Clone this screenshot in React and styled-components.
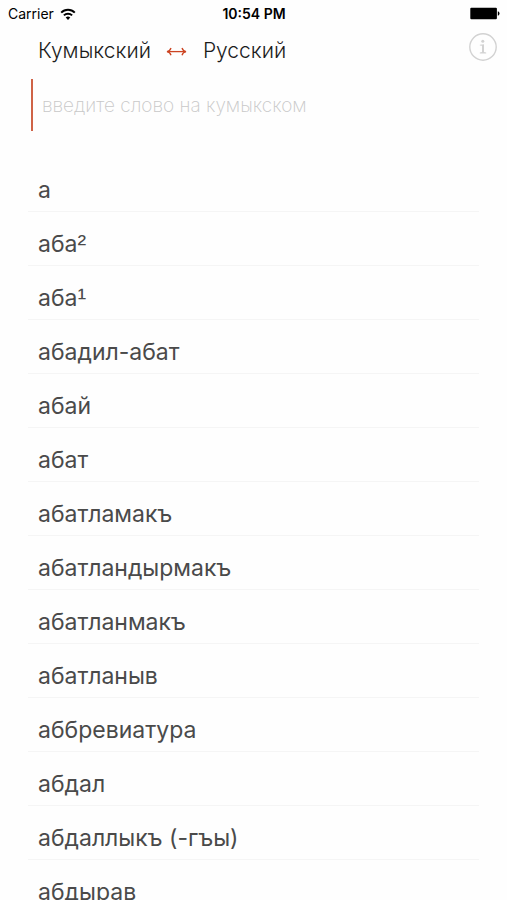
import React, { useState } from 'react'
import styled, { createGlobalStyle } from 'styled-components'

const colors = {
  background: '#fefefe',
  black: '#000',
  title: '#1c1c1c',
  word: '#4a4a4a',
  accent: '#cc4422',
  caret: '#cf6347',
  placeholder: '#c8c8c8',
  line: '#f5f5f5',
  info: '#d2d2d2'
}

const fonts = {
  text: `Inter, 'Liberation Sans', sans-serif`,
  index: `'Liberation Sans', Arial, sans-serif`
}

// homonyms carry a superscript index
const words = [
  { text: 'а' },
  { text: 'аба', index: '²' },
  { text: 'аба', index: '¹' },
  { text: 'абадил-абат' },
  { text: 'абай' },
  { text: 'абат' },
  { text: 'абатламакъ' },
  { text: 'абатландырмакъ' },
  { text: 'абатланмакъ' },
  { text: 'абатланыв' },
  { text: 'аббревиатура' },
  { text: 'абдал' },
  { text: 'абдаллыкъ (-гъы)' },
  { text: 'абдырав' }
]

const languages = [
  { name: 'Кумыкский', hint: 'введите слово на кумыкском' },
  { name: 'Русский', hint: 'введите слово на русском' }
]

const WifiIcon = () =>
  <svg width="16" height="12" viewBox="0 0 16 12" fill="none" stroke={colors.black} strokeWidth="2" aria-hidden="true">
    <path d="M1.2 4.6a9.6 9.6 0 0 1 13.6 0" />
    <path d="M3.9 7.4a5.8 5.8 0 0 1 8.2 0" />
    <path d="M8 12 5.7 9.6a3.3 3.3 0 0 1 4.6 0z" fill={colors.black} stroke="none" />
  </svg>

const BatteryIcon = () =>
  <svg width="30" height="13" viewBox="0 0 30 13" aria-hidden="true">
    <rect x="0.3" y="0.8" width="26.6" height="11.4" rx="1" />
    <path d="M27.8 4.2a2.4 2.4 0 0 1 0 4.6z" />
  </svg>

const SwapIcon = () =>
  <svg width="21" height="12" viewBox="0 0 21 12" fill="none" stroke={colors.accent} strokeWidth="1.3" aria-hidden="true">
    <path d="M1.5 6.6h18" />
    <path d="M5 3C4.4 4.9 2.9 6.2 1 6.6c1.9.4 3.4 1.7 4 3.6M16 3c.6 1.9 2.1 3.2 4 3.6-1.9.4-3.4 1.7-4 3.6" />
  </svg>

const InfoIcon = () =>
  <svg width="28" height="28" viewBox="0 0 28 28" fill={colors.info} aria-hidden="true">
    <circle cx="14" cy="14" r="13.2" fill="none" stroke={colors.info} strokeWidth="1.4" />
    <circle cx="13.8" cy="8.3" r="1.5" />
    <path d="M10.8 11.7l4.2-.5v7.9l2.2.4v.9h-6.4v-.9l2.2-.4v-6.3l-2.2-.3z" />
  </svg>

const App = () => {
  const [from, setFrom] = useState(0)
  const [query, setQuery] = useState('')
  const found = words.filter(word => word.text.startsWith(query.toLowerCase()))

  return (
    <Screen>
      <GlobalStyle />
      <StatusBar>
        <Carrier>Carrier <WifiIcon /></Carrier>
        <Clock>10:54 PM</Clock>
        <Battery><BatteryIcon /></Battery>
      </StatusBar>
      <Header>
        <Language>{languages[from].name}</Language>
        <SwapButton type="button" aria-label="Поменять языки" onClick={() => setFrom(1 - from)}>
          <SwapIcon />
        </SwapButton>
        <Language>{languages[1 - from].name}</Language>
        <InfoButton type="button" aria-label="О программе">
          <InfoIcon />
        </InfoButton>
      </Header>
      <SearchInput
        type="text"
        aria-label="Поиск слова"
        placeholder={languages[from].hint}
        value={query}
        onChange={e => setQuery(e.target.value)}
      />
      <WordList>
        {found.map(({ text, index }) =>
          <WordRow key={text + (index || '')}>
            <WordButton type="button">{text}{index && <WordIndex>{index}</WordIndex>}</WordButton>
          </WordRow>
        )}
      </WordList>
    </Screen>
  )
}

export default App

/* STYLES */
const GlobalStyle = createGlobalStyle`
  * {
    box-sizing: border-box;
  }
  body {
    margin: 0;
    background-color: ${colors.background};
    font-family: ${fonts.text};
  }
  button {
    margin: 0;
    padding: 0;
    border: 0;
    background: none;
    font: inherit;
    color: inherit;
    cursor: pointer;
  }
`

const Screen = styled.main`
  display: flex;
  flex-direction: column;
  height: 100vh;
`

const StatusBar = styled.div`
  display: grid;
  grid-template-columns: 1fr auto 1fr;
  align-items: center;
  flex: none;
  height: 27px;
  padding: 0 7px 0 8px;
  font-size: 14px;
  color: ${colors.black};
`

const Carrier = styled.span`
  display: flex;
  align-items: center;
  gap: 6px;
`

const Clock = styled.time`
  font-weight: 600;
`

const Battery = styled.span`
  display: flex;
  justify-content: flex-end;
`

const Header = styled.header`
  display: flex;
  align-items: center;
  flex: none;
  height: 48px;
  padding: 0 10px 0 38px;
`

const Language = styled.span`
  font-size: 21px;
  font-weight: 300;
  line-height: 28px;
  color: ${colors.title};
`

const SwapButton = styled.button`
  && {
    display: flex;
    margin: 0 16px 0 15px;
  }
`

const InfoButton = styled.button`
  && {
    display: flex;
    margin: 0 0 8px auto;
  }
`

const SearchInput = styled.input`
  flex: none;
  height: 52px;
  margin: 4px 28px 0 31px;
  padding: 0 9px;
  border: 0;
  border-left: 2px solid ${colors.caret};
  border-radius: 0;
  outline: none;
  background: none;
  font-family: ${fonts.text};
  font-size: 19px;
  font-weight: 200;
  color: ${colors.word};
  &::placeholder {
    color: ${colors.placeholder};
    opacity: 1;
  }
`

const WordList = styled.ul`
  flex: 1;
  min-height: 0;
  margin: 27px 28px 0;
  padding: 0;
  list-style: none;
  overflow-y: auto;
  scrollbar-width: none;
`

const WordRow = styled.li`
  height: 54px;
  border-bottom: 1px solid ${colors.line};
`

const WordButton = styled.button`
  && {
    width: 100%;
    height: 100%;
    padding: 10px 10px 0;
    font-size: 23px;
    line-height: 28px;
    text-align: left;
    color: ${colors.word};
  }
`

const WordIndex = styled.span`
  font-family: ${fonts.index};
  font-size: 26px;
  line-height: 1;
`
